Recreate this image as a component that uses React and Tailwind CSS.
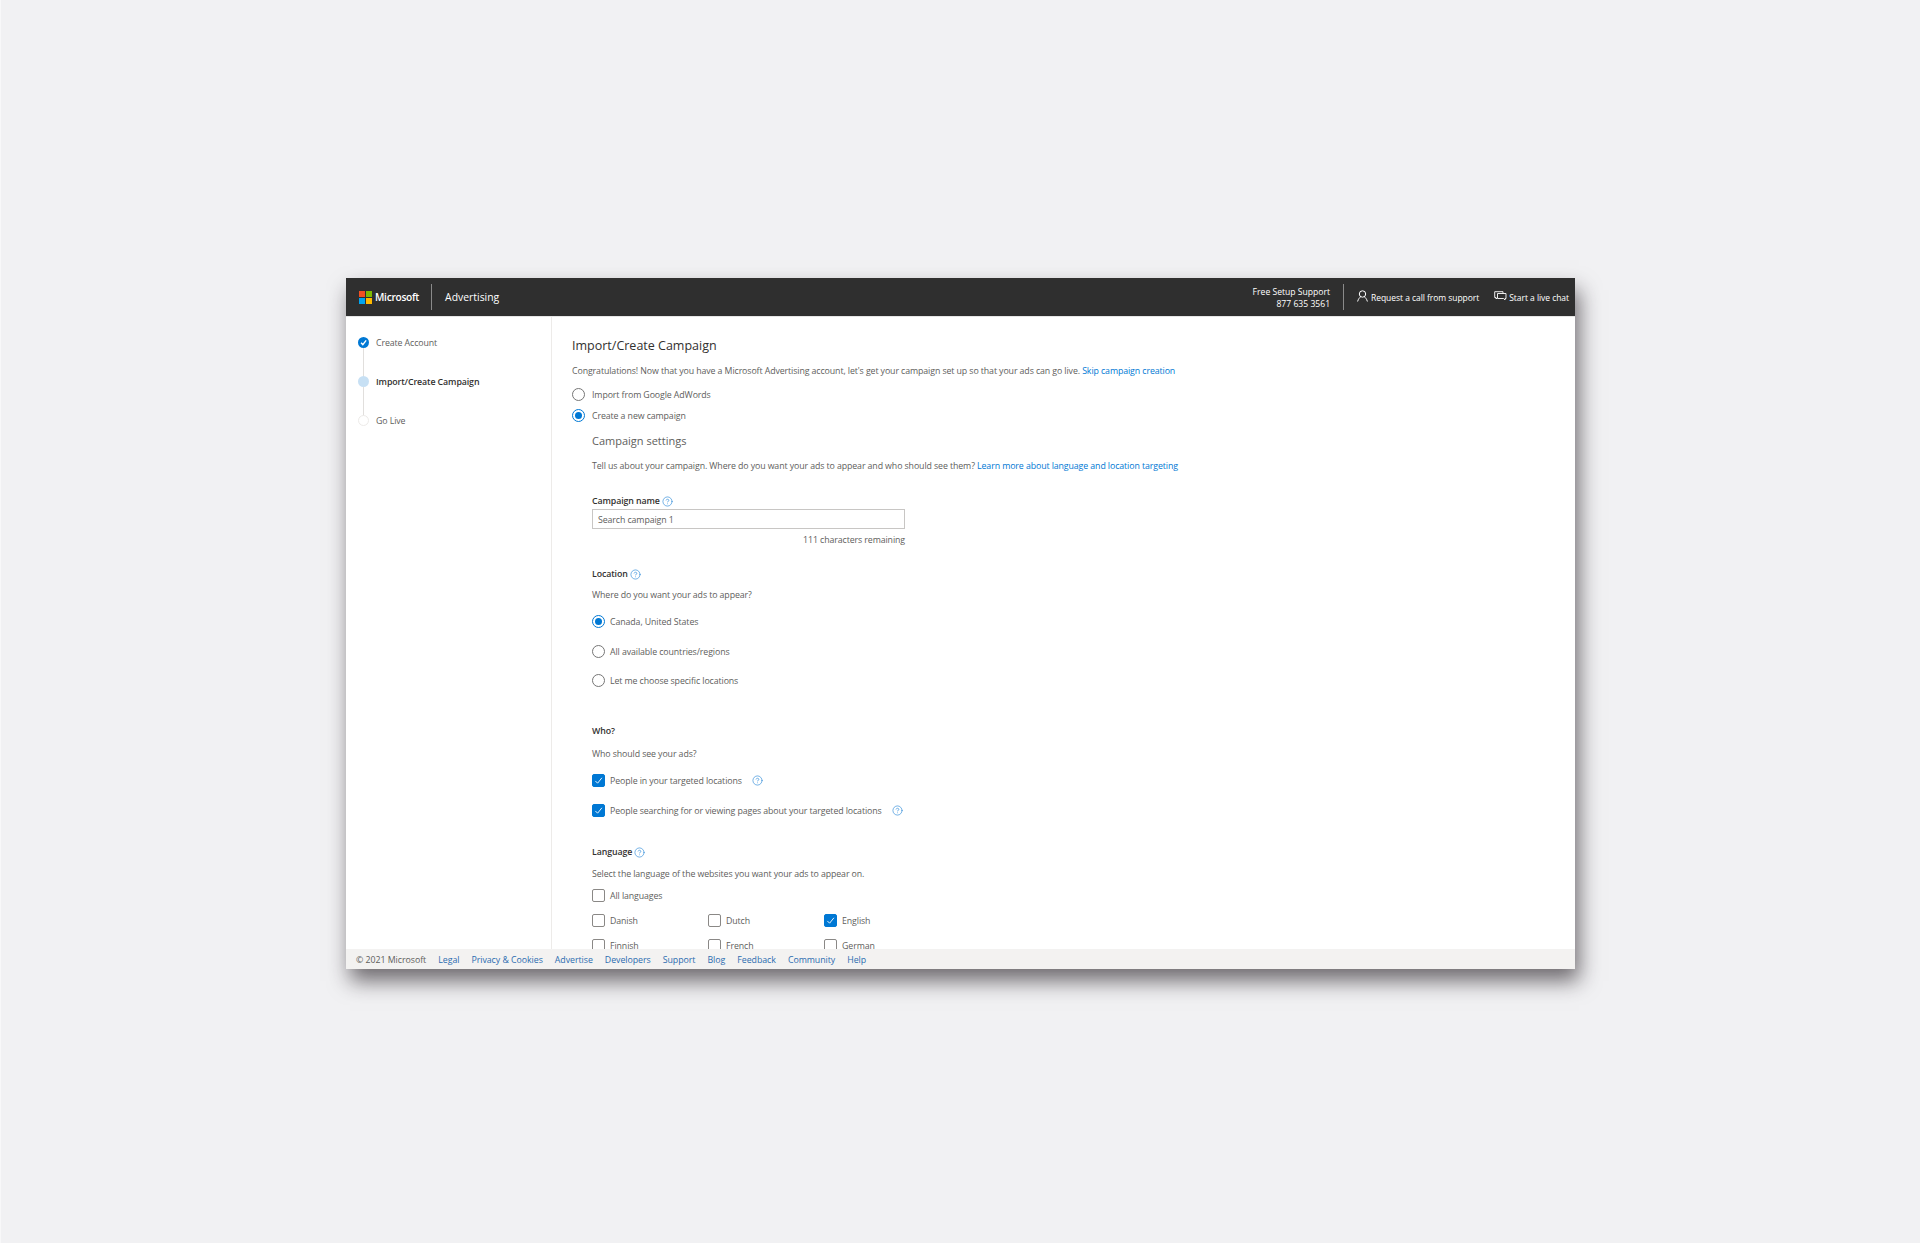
import { CircleHelp } from 'lucide-react';

const FOOTER_LINKS = ['Legal', 'Privacy & Cookies', 'Advertise', 'Developers', 'Support', 'Blog', 'Feedback', 'Community', 'Help'];

function Help({ className = '' }) {
  return <CircleHelp size={11} strokeWidth={1.4} className={`text-[#2b88d8] shrink-0 ${className}`} />;
}

function Radio({ checked, label, className = '', gap = 'ml-[5px]' }) {
  return (
    <div className={`flex items-center h-[14px] ${className}`}>
      <span
        className={`w-[13px] h-[13px] rounded-full border flex items-center justify-center bg-white shrink-0 ${
          checked ? 'border-[#0078d4]' : 'border-[#767676]'
        }`}
      >
        {checked && <span className="w-[7px] h-[7px] rounded-full bg-[#0078d4]" />}
      </span>
      <span className={`pt-[2px] ${gap}`}>{label}</span>
    </div>
  );
}

function Check({ checked, label, help, className = '' }) {
  return (
    <div className={`flex items-center h-[14px] ${className}`}>
      <span
        className={`w-[13px] h-[13px] rounded-[2px] border flex items-center justify-center shrink-0 ${
          checked ? 'bg-[#0078d4] border-[#0078d4]' : 'bg-white border-[#8a8886]'
        }`}
      >
        {checked && (
          <svg width="9" height="9" viewBox="0 0 10 10" fill="none" stroke="white" strokeWidth="1">
            <path d="M1.5 5.5 L4 8 L8.8 2" />
          </svg>
        )}
      </span>
      <span className="ml-[5px] pt-[2px]">{label}</span>
      {help && <Help className="ml-[10px] mt-[1px]" />}
    </div>
  );
}

function Step({ state, label, className = '' }) {
  return (
    <div className={`flex items-center h-[14px] relative ${className}`}>
      {state === 'done' && (
        <span className="w-[11px] h-[11px] rounded-full bg-[#0078d4] flex items-center justify-center shrink-0 -mt-[1px]">
          <svg width="7" height="7" viewBox="0 0 10 10" fill="none" stroke="white" strokeWidth="2">
            <path d="M1.5 5.5 L4 8 L8.8 2" />
          </svg>
        </span>
      )}
      {state === 'current' && <span className="w-[11px] h-[11px] rounded-full bg-[#c7e0f4] shrink-0 -mt-[1px]" />}
      {state === 'todo' && <span className="w-[11px] h-[11px] rounded-full bg-white border border-[#edebe9] shrink-0 -mt-[1px]" />}
      <span className={`ml-[7px] ${state === 'current' ? 'font-semibold text-[#323130]' : ''}`}>{label}</span>
    </div>
  );
}

function LanguageRow({ items, className = '' }) {
  return (
    <div className={`grid grid-cols-[116px_116px_116px] ${className}`}>
      {items.map((item) => (
        <Check key={item.label} label={item.label} checked={item.checked} />
      ))}
    </div>
  );
}

export default function App() {
  return (
    <div className="min-h-screen bg-[#f1f1f3] border-l border-[#f8f8f9] pl-[345px] pt-[278px] font-['Open_Sans','Noto_Sans',sans-serif] text-[8.8px] tracking-[-0.1px] leading-[16px] text-[#605e5c]">
      <div className="w-[1229px] h-[691px] flex flex-col bg-white shadow-[4px_12px_20px_rgba(30,25,30,0.62)]">
        {/* Header */}
        <header className="h-[39px] shrink-0 bg-[#2f2f2f] border-b border-[#e6e6e6] flex items-center text-white pl-[13px] pr-[6px]">
          <div className="grid grid-cols-2 gap-[1px] w-[13px] h-[13px]">
            <span className="bg-[#f25022]" />
            <span className="bg-[#7fba00]" />
            <span className="bg-[#00a4ef]" />
            <span className="bg-[#ffb900]" />
          </div>
          <span className="ml-[3px] text-[10.2px] font-semibold tracking-[-0.3px]">Microsoft</span>
          <span className="w-px h-[26px] bg-[#8a8a8a] ml-[12px]" />
          <span className="ml-[13px] text-[10.4px] tracking-normal">Advertising</span>

          <div className="ml-auto text-right leading-[12px] text-[8.6px] tracking-normal pt-[1px]">
            <div>Free Setup Support</div>
            <div>877 635 3561</div>
          </div>
          <span className="w-px h-[26px] bg-[#8a8a8a] ml-[13px]" />
          <div className="flex items-center ml-[13px] text-[8.5px] tracking-[-0.05px] mt-[2px]">
            <svg width="11" height="12" viewBox="0 0 11 12" fill="none" stroke="white" strokeWidth="1" className="-mt-[4px]">
              <circle cx="5.5" cy="4" r="3.2" />
              <path d="M0.6 11.5 C1.3 8.8 3 7.2 3.6 6.8 M10.4 11.5 C9.7 8.8 8 7.2 7.4 6.8" />
            </svg>
            <span className="ml-[3px]">Request a call from support</span>
          </div>
          <div className="flex items-center ml-[15px] text-[8.5px] tracking-[-0.05px] mt-[2px]">
            <svg width="13" height="11" viewBox="0 0 13 11" fill="none" stroke="white" strokeWidth="0.9" className="-mt-[4px]">
              <path d="M9 2.5 V0.7 H0.7 V6.5 H2 V8 L3.5 6.5" />
              <path d="M3.5 2.5 H12 V7.5 H11 V9 L9.5 7.5 H3.5 Z" />
            </svg>
            <span className="ml-[2px]">Start a live chat</span>
          </div>
        </header>

        {/* Body */}
        <div className="flex flex-1 min-h-0 overflow-hidden">
          <aside className="w-[206px] shrink-0 border-r border-[#edebe9] pl-[12px] pt-[19px] relative">
            <span className="absolute left-[17px] top-[30px] w-px h-[72px] bg-[#e1dfdd]" />
            <Step state="done" label="Create Account" className="relative" />
            <Step state="current" label="Import/Create Campaign" className="mt-[25px] relative" />
            <Step state="todo" label="Go Live" className="mt-[25px] relative" />
          </aside>

          <main className="flex-1 pl-[20px] pt-[19px]">
            <h1 className="h-[18px] text-[12.5px] tracking-normal leading-[20px] text-[#323130]">Import/Create Campaign</h1>
            <p className="mt-[9px] h-[14px]">
              Congratulations! Now that you have a Microsoft Advertising account, let's get your campaign set up so that your ads can go live.{' '}
              <a className="text-[#0078d4]">Skip campaign creation</a>
            </p>
            <Radio label="Import from Google AdWords" gap="ml-[7px]" className="mt-[10px]" />
            <Radio checked label="Create a new campaign" gap="ml-[7px]" className="mt-[7px]" />

            <div className="pl-[20px]">
              <h2 className="mt-[11px] text-[11px] tracking-normal leading-[16px]">Campaign settings</h2>
              <p className="mt-[9px] h-[14px]">
                Tell us about your campaign. Where do you want your ads to appear and who should see them?{' '}
                <a className="text-[#0078d4]">Learn more about language and location targeting</a>
              </p>

              <div className="mt-[21px] h-[14px] flex items-center gap-[2px] font-semibold text-[#323130] pt-[2px]">
                Campaign name <Help />
              </div>
              <div className="mt-[2px] w-[313px] h-[20px] border border-[#c8c6c4] px-[5px] pt-[2px] flex items-center">Search campaign 1</div>
              <div className="mt-[3px] h-[14px] w-[313px] text-right">111 characters remaining</div>

              <div className="mt-[20px] h-[14px] flex items-center gap-[2px] font-semibold text-[#323130] pt-[2px]">
                Location <Help />
              </div>
              <p className="mt-[7px] h-[14px]">Where do you want your ads to appear?</p>
              <Radio checked label="Canada, United States" className="mt-[13px]" />
              <Radio label="All available countries/regions" className="mt-[16px]" />
              <Radio label="Let me choose specific locations" className="mt-[15px]" />

              <div className="mt-[36px] h-[14px] font-semibold text-[#323130]">Who?</div>
              <p className="mt-[9px] h-[14px]">Who should see your ads?</p>
              <Check checked help label="People in your targeted locations" className="mt-[13px]" />
              <Check checked help label="People searching for or viewing pages about your targeted locations" className="mt-[16px]" />

              <div className="mt-[27px] h-[14px] flex items-center gap-[2px] font-semibold text-[#323130] pt-[2px]">
                Language <Help />
              </div>
              <p className="mt-[8px] h-[14px]">Select the language of the websites you want your ads to appear on.</p>
              <Check label="All languages" className="mt-[8px]" />
              <LanguageRow
                className="mt-[11px]"
                items={[{ label: 'Danish' }, { label: 'Dutch' }, { label: 'English', checked: true }]}
              />
              <LanguageRow className="mt-[11px]" items={[{ label: 'Finnish' }, { label: 'French' }, { label: 'German' }]} />
            </div>
          </main>
        </div>

        {/* Footer */}
        <footer className="h-[20px] shrink-0 bg-[#f3f2f1] flex items-center gap-[12px] pl-[10px] pt-[2px] tracking-[-0.04px]">
          <span>© 2021 Microsoft</span>
          {FOOTER_LINKS.map((link) => (
            <a key={link} className="text-[#2b6cb0]">
              {link}
            </a>
          ))}
        </footer>
      </div>
    </div>
  );
}
